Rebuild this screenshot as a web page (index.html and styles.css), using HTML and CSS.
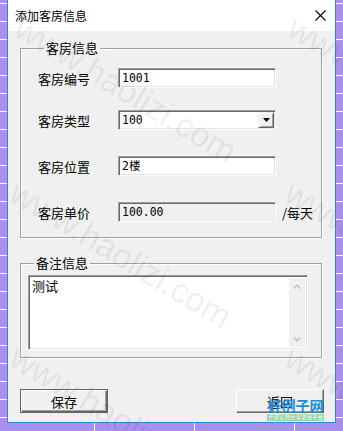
FILE: index.html
```html
<!DOCTYPE html>
<html lang="zh">
<head>
<meta charset="utf-8">
<title>添加客房信息</title>
<link rel="stylesheet" href="styles.css">
</head>
<body>
<div class="window">
  <div class="titlebar">
    <span class="title">添加客房信息</span>
    <svg class="close" width="11" height="11" viewBox="0 0 11 11"><path d="M0.5 0.5L10.5 10.5M10.5 0.5L0.5 10.5" stroke="#000" stroke-width="1.1" fill="none"/></svg>
  </div>
  <div class="client">
    <fieldset class="group g1">
      <legend>客房信息</legend>
      <div class="rows">
        <div class="row"><span class="label">客房编号</span><div class="input">1001</div></div>
        <div class="row r2"><span class="label">客房类型</span><div class="input combo"><span class="combo-text">100</span><span class="drop"><svg width="7" height="4" viewBox="0 0 7 4"><path d="M0 0H7L3.5 4Z" fill="#000"/></svg></span></div></div>
        <div class="row"><span class="label">客房位置</span><div class="input">2楼</div></div>
        <div class="row"><span class="label">客房单价</span><div class="input readonly">100.00</div><span class="unit">/每天</span></div>
      </div>
    </fieldset>
    <fieldset class="group g2">
      <legend>备注信息</legend>
      <div class="memo">
        <div class="memo-text">测试</div>
        <div class="vscroll">
          <svg width="8" height="5" viewBox="0 0 8 5"><path d="M0.8 4.5L4 1.2L7.2 4.5" stroke="#c2c2c2" stroke-width="1.6" fill="none"/></svg>
          <svg width="8" height="5" viewBox="0 0 8 5"><path d="M0.8 0.5L4 3.8L7.2 0.5" stroke="#c2c2c2" stroke-width="1.6" fill="none"/></svg>
        </div>
      </div>
    </fieldset>
    <div class="buttons">
      <button class="btn default">保存</button>
      <button class="btn">返回</button>
    </div>
  </div>
</div>
<div class="watermark">
  <span class="wm w1">www.haolizi.com</span>
  <span class="wm w2">www.haolizi.com</span>
  <span class="wm w3">www.haolizi.com</span>
  <span class="wm w4">www.haolizi.com</span>
  <span class="wm w5">www.haolizi.com</span>
  <span class="wm w6">www.haolizi.com</span>
</div>
<div class="logo">
  <div class="logo-main">好例子网</div>
  <div class="logo-sub">开源实例分享交流平台</div>
</div>
</body>
</html>
```
FILE: styles.css
```css
html, body {
  margin: 0;
  padding: 0;
}
body {
  width: 343px;
  height: 431px;
  overflow: hidden;
  position: relative;
  font-family: "Noto Sans CJK SC", sans-serif;
  background-color: #a990ea;
  background-image:
    linear-gradient(rgba(255,255,255,0.9) 1px, transparent 1px),
    linear-gradient(90deg, rgba(255,255,255,0.9) 1px, transparent 1px);
  background-size: 100% 18px, 100px 100%;
  background-position: 0 3px, 94px 0;
}
.window {
  margin-left: 7px;
  width: 329px;
  height: 423px;
  box-sizing: border-box;
  border: 1px solid #2b87da;
  border-top: none;
  background: #f0f0f0;
  display: flex;
  flex-direction: column;
}
.titlebar {
  height: 31px;
  flex: none;
  background: #fff;
  display: flex;
  align-items: center;
  justify-content: space-between;
  padding: 0 9px 0 7px;
}
.title {
  font-size: 12px;
  color: #000;
  line-height: 16px;
}
.close {
  display: block;
  margin-top: -1px;
}
.client {
  flex: 1;
  padding: 9px 13px 0 12px;
}
.group {
  margin: 0;
  border: 1px solid #a0a0a0;
  box-shadow: inset 1px 1px 0 #fff, 1px 1px 0 #fff;
  min-width: 0;
}
.group legend {
  margin-left: 6px;
  padding: 0 2px;
  font-size: 13px;
  line-height: 16px;
  color: #000;
  background: #f0f0f0;
}
.g1 {
  padding: 12px 0 15px 17px;
}
.rows {
  display: flex;
  flex-direction: column;
  gap: 26px;
}
.row {
  display: flex;
  align-items: center;
  height: 20px;
}
.r2 {
  margin-top: -4px;
}
.label {
  width: 80px;
  font-size: 13px;
  color: #000;
}
.input {
  width: 158px;
  height: 20px;
  box-sizing: border-box;
  border-style: solid;
  border-width: 1px;
  border-color: #a0a0a0 #fff #fff #a0a0a0;
  box-shadow: inset 1px 1px 0 #696969, inset -1px -1px 0 #e3e3e3;
  background: #fff;
  padding: 0 3px;
  font-family: "DejaVu Sans Mono", "Noto Sans CJK SC", monospace;
  font-size: 11.5px;
  line-height: 18px;
  color: #000;
}
.readonly {
  background: #f0f0f0;
}
.combo {
  display: flex;
  justify-content: space-between;
  padding-right: 1px;
}
.drop {
  width: 16px;
  height: 16px;
  margin-top: 1px;
  box-sizing: border-box;
  background: #f0f0f0;
  border-style: solid;
  border-width: 1px;
  border-color: #f0f0f0 #696969 #696969 #f0f0f0;
  box-shadow: inset 1px 1px 0 #fff, inset -1px -1px 0 #a0a0a0;
  display: flex;
  align-items: center;
  justify-content: center;
}
.drop svg {
  display: block;
}
.unit {
  margin-left: 6px;
  font-size: 13px;
  color: #000;
}
.g2 {
  margin-top: 17px;
  padding: 4px 0 7px 7px;
}
.memo {
  width: 280px;
  height: 75px;
  box-sizing: border-box;
  border-style: solid;
  border-width: 1px;
  border-color: #a0a0a0 #fff #fff #a0a0a0;
  box-shadow: inset 1px 1px 0 #696969, inset -1px -1px 0 #e3e3e3;
  background: #fff;
  display: flex;
  padding: 2px 2px 2px 2px;
}
.memo-text {
  flex: 1;
  font-size: 13px;
  line-height: 16px;
  padding-left: 1px;
  color: #000;
}
.vscroll {
  width: 16px;
  background: #f0f0f0;
  display: flex;
  flex-direction: column;
  align-items: center;
  justify-content: space-between;
  padding: 6px 0 5px;
}
.vscroll svg {
  display: block;
}
.buttons {
  margin-top: 31px;
  width: 304px;
  display: flex;
  justify-content: space-between;
}
.btn {
  width: 88px;
  height: 24px;
  box-sizing: border-box;
  margin: 0;
  padding: 0;
  font-family: "Noto Sans CJK SC", sans-serif;
  font-size: 13px;
  color: #000;
  background: #f0f0f0;
  border-style: solid;
  border-width: 1px;
  border-color: #fff #696969 #696969 #fff;
  box-shadow: inset -1px -1px 0 #a0a0a0;
}
.btn.default {
  border-color: #646464;
  box-shadow: inset 1px 1px 0 #fff, inset -1px -1px 0 #696969, inset -2px -2px 0 #a0a0a0;
}
.watermark {
  position: absolute;
  left: 0;
  top: 0;
  width: 343px;
  height: 431px;
  overflow: hidden;
  pointer-events: none;
}
.wm {
  position: absolute;
  font-family: "Liberation Sans", sans-serif;
  font-size: 34px;
  line-height: 34px;
  color: rgba(0, 0, 0, 0.075);
  white-space: nowrap;
  transform: rotate(31deg);
  transform-origin: 0 0;
}
.w1 { left: 27px; top: 10px; }
.w2 { left: 22px; top: 175px; }
.w3 { left: 22px; top: 340px; }
.w4 { left: 300px; top: 10px; }
.w5 { left: 297px; top: 175px; }
.w6 { left: 297px; top: 340px; }
.logo {
  position: absolute;
  left: 267px;
  top: 396px;
  width: 57px;
}
.logo-main {
  font-family: "Noto Sans CJK SC", sans-serif;
  font-weight: bold;
  font-size: 14px;
  line-height: 18px;
  color: #1b8ddb;
  text-align: center;
  white-space: nowrap;
}
.logo-sub {
  background: #8fd3a0;
  color: #fff;
  font-size: 5.5px;
  line-height: 7px;
  text-align: center;
  white-space: nowrap;
  overflow: hidden;
}
```
